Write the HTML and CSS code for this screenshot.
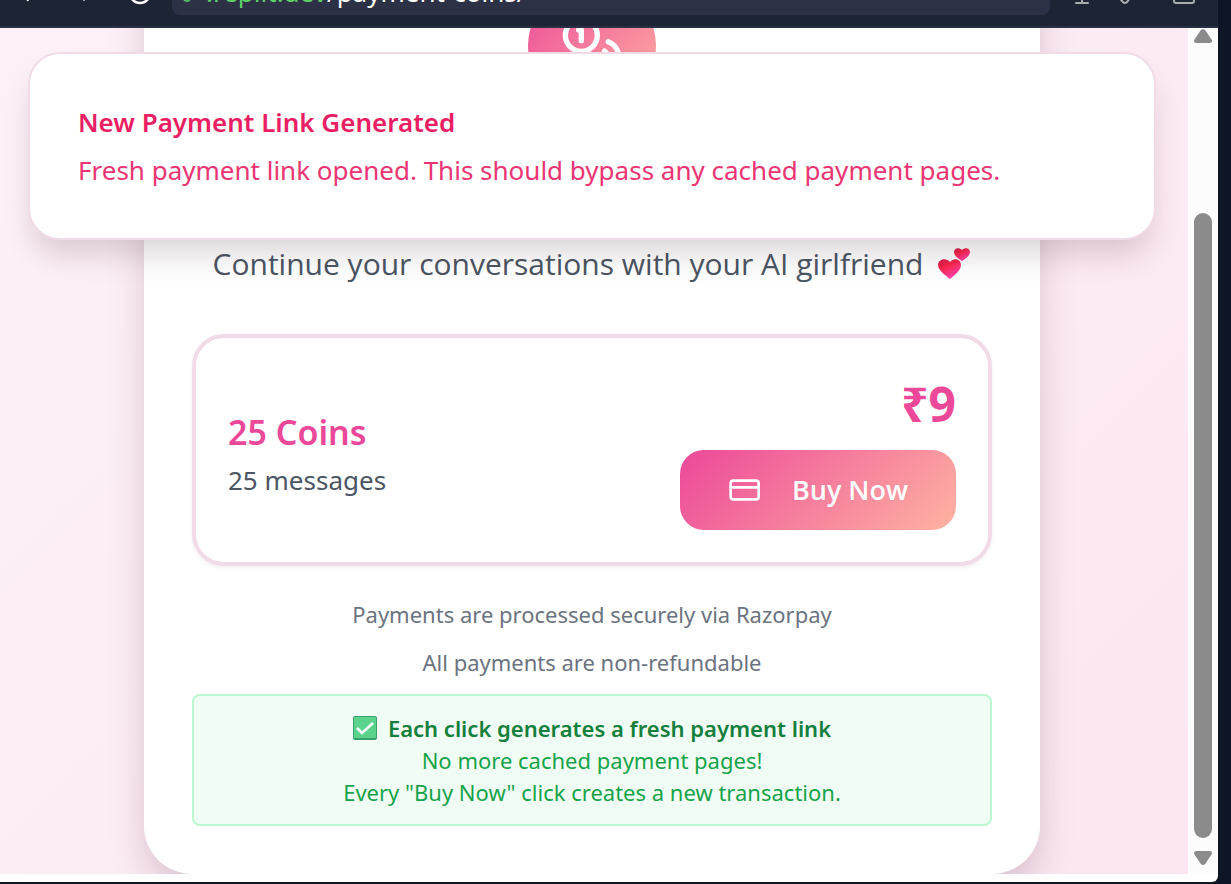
FILE: index.html
```html
<!DOCTYPE html>
<html lang="en">
<head>
<meta charset="utf-8">
<title>Buy Coins</title>
<link rel="stylesheet" href="styles.css">
</head>
<body>
<div class="window">
  <header class="toolbar">
    <div class="nav-icons">
      <svg viewBox="0 0 172 28" width="172" height="28" fill="none" aria-hidden="true">
        <path d="M27 -2l1 3" stroke="#fff" stroke-width="2"/>
        <path d="M84 -2v3" stroke="#9a9ea6" stroke-width="2"/>
        <circle cx="140" cy="-7" r="10" stroke="#fff" stroke-width="2.4"/>
      </svg>
    </div>
    <div class="address">
      <svg class="lock" viewBox="0 0 10 10" width="10" height="10" aria-hidden="true"><circle cx="5" cy="-2" r="4" fill="#55b96a"/></svg>
      <span class="url"><span class="host">.replit.dev</span>/payment-coins/</span>
    </div>
    <div class="tool-icons">
      <svg viewBox="0 0 168 28" width="168" height="28" fill="none" stroke="#a9adad" stroke-width="2" stroke-linecap="round" aria-hidden="true">
        <path d="M26 3h12M32 3v-6M71 0l2 2q2 2 4 0l4-5M124 -4v5q0 2 2 2h16q2 0 2-2v-5"/>
      </svg>
    </div>
  </header>
  <div class="viewport">
    <main class="page">
      <section class="card">
        <div class="coin-badge">
          <svg viewBox="0 0 24 24" width="64" height="64" fill="none" stroke="#fff" stroke-width="2" stroke-linecap="round" stroke-linejoin="round" aria-hidden="true">
            <circle cx="8" cy="8" r="6"/><path d="M18.09 10.37A6 6 0 1 1 10.34 18M7 6h1v4M16.71 13.88l.7.71-2.82 2.82"/>
          </svg>
        </div>
        <p class="subtitle">Continue your conversations with your AI girlfriend
          <svg class="hearts" viewBox="0 0 34 34" width="34" height="34" role="img" aria-label="Two hearts">
            <defs><linearGradient id="heart" x1="0" y1="0" x2=".6" y2="1"><stop offset="0" stop-color="#c91d4b"/><stop offset=".4" stop-color="#fa2548"/><stop offset="1" stop-color="#ff43b0"/></linearGradient></defs>
            <path fill="url(#heart)" d="M13 32C8 28 1 23 1 18c0-6 8-8 12-3 4-5 11-3 11 3 0 5-6 10-11 14z"/>
            <path fill="url(#heart)" d="M25 14c-3-2-8-5-8-9 0-4 5-5 8-2 3-3 8-2 8 2 0 4-5 7-8 9z"/>
          </svg>
        </p>
        <div class="pack">
          <div class="pack-info">
            <h2 class="pack-name">25 Coins</h2>
            <p class="pack-detail">25 messages</p>
          </div>
          <div class="pack-buy">
            <div class="price">₹9</div>
            <button class="buy" type="button">
              <svg viewBox="0 0 24 24" width="32" height="32" fill="none" stroke="currentColor" stroke-width="2" stroke-linecap="round" stroke-linejoin="round" aria-hidden="true"><rect width="21" height="14" x="2" y="5" rx="2"/><path d="M2 10h21"/></svg>
              <span>Buy Now</span>
            </button>
          </div>
        </div>
        <div class="notes">
          <p>Payments are processed securely via Razorpay</p>
          <p>All payments are non-refundable</p>
          <div class="notice">
            <p class="notice-title">
              <svg class="check" viewBox="0 0 24 24" width="24" height="24" role="img" aria-label="Done"><rect width="24" height="24" rx="2" fill="#38a06c"/><rect x="1" y="1" width="22" height="21" rx="1" fill="#5bd38d"/><path d="M4 12l5 5L20 7" fill="none" stroke="#fff" stroke-width="2.500"/></svg>
              Each click generates a fresh payment link</p>
            <p>No more cached payment pages!</p>
            <p>Every "Buy Now" click creates a new transaction.</p>
          </div>
        </div>
      </section>
      <div class="toast" role="status">
        <p class="toast-title">New Payment Link Generated</p>
        <p class="toast-text">Fresh payment link opened. This should bypass any cached payment pages.</p>
      </div>
    </main>
    <div class="scrollbar" aria-hidden="true">
      <svg viewBox="0 0 18 14" width="18" height="14"><path d="M6.500 1.500q2.500-3 5 0l6 9q1.500 3.500-2 3.500h-13q-3.500 0-2-3.500z" fill="#8b8b8b"/></svg>
      <div class="thumb"></div>
      <svg viewBox="0 0 18 14" width="18" height="14"><path d="M6.500 12.500q2.500 3 5 0l6-9q1.500-3.500-2-3.500h-13q-3.500 0-2 3.500z" fill="#8b8b8b"/></svg>
    </div>
  </div>
</div>
</body>
</html>
```
FILE: styles.css
```css
* { box-sizing: border-box; }
body {
  margin: 0;
  height: 100vh;
  padding: 0 13px 2px 0;
  overflow: hidden;
  background: #0e1524;
  font-family: "Noto Sans", "Open Sans", sans-serif;
}
p, h2 { margin: 0; }
.window {
  height: 100%;
  display: flex;
  flex-direction: column;
  background: #fff;
  border-radius: 0 0 6px 0;
  overflow: hidden;
}
.toolbar {
  flex: none;
  height: 28px;
  display: flex;
  background: #1d2433;
  border-bottom: 2px solid #2b3144;
}
.toolbar svg { display: block; }
.address {
  flex: 1;
  height: 15px;
  display: flex;
  align-items: flex-end;
  gap: 14px;
  padding-left: 10px;
  background: #2c3145;
  border-radius: 0 0 8px 8px;
  color: #fff;
  font-size: 26px;
  line-height: 30px;
  overflow: hidden;
}
.lock { align-self: flex-start; }
.url { padding-bottom: 8px; }
.host { color: #5fd068; }
.viewport {
  flex: 1;
  min-height: 0;
  display: flex;
  padding-bottom: 8px;
}
.page {
  position: relative;
  flex: 1;
  display: flex;
  flex-direction: column;
  justify-content: flex-end;
  align-items: center;
  padding-right: 4px;
  overflow: hidden;
  background: linear-gradient(135deg, #fdf1f7, #fbe6f1);
}
.card {
  flex: none;
  width: 100%;
  max-width: 896px;
  padding: 48px;
  background: #fff;
  border-radius: 48px;
  box-shadow: 0 20px 40px -6px rgba(60, 10, 40, .22);
}
.coin-badge {
  width: 128px;
  height: 128px;
  margin: 0 auto 128px;
  display: flex;
  align-items: center;
  justify-content: center;
  border-radius: 50%;
  background: linear-gradient(135deg, #ec4899, #ffb3a1);
}
.subtitle {
  margin-bottom: 44px;
  display: flex;
  justify-content: center;
  align-items: center;
  gap: 14px;
  color: #4b5563;
  font-family: "Open Sans", "Noto Sans", sans-serif;
  font-size: 30px;
  line-height: 52px;
  white-space: nowrap;
}
.pack {
  display: flex;
  justify-content: space-between;
  align-items: center;
  padding: 32px;
  border: 4px solid #f1dbe6;
  border-radius: 32px;
  box-shadow: 0 2px 4px rgba(0, 0, 0, .06);
}
.pack-name {
  color: #ec4899;
  font-size: 34px;
  font-weight: 600;
  line-height: 60px;
}
.pack-detail {
  color: #4b5563;
  font-size: 26px;
  line-height: 36px;
}
.pack-buy {
  display: flex;
  flex-direction: column;
  align-items: flex-end;
  gap: 12px;
}
.price {
  color: #ec4899;
  font-size: 48px;
  font-weight: 700;
  line-height: 68px;
}
.buy {
  height: 80px;
  display: flex;
  align-items: center;
  gap: 32px;
  padding: 0 48px;
  border: 0;
  border-radius: 24px;
  background: linear-gradient(135deg, #ec4899, #ffb3a1);
  color: #fff;
  font: 600 27px/40px "Open Sans", "Noto Sans", sans-serif;
}
.notes {
  margin-top: 32px;
  display: flex;
  flex-direction: column;
  gap: 16px;
  color: #6b7280;
  font-size: 22px;
  line-height: 32px;
  text-align: center;
}
.notice {
  padding: 16px;
  border: 2px solid #bbf7d0;
  border-radius: 8px;
  background: #f0fdf4;
  color: #16a34a;
}
.notice-title {
  display: flex;
  justify-content: center;
  align-items: center;
  gap: 11px;
  color: #15803d;
  font-weight: 600;
}
.toast {
  position: absolute;
  top: 24px;
  left: 28px;
  right: 32px;
  padding: 48px;
  border: 2px solid #f1dbe6;
  border-radius: 32px;
  background: #fff;
  box-shadow: 0 20px 30px -6px rgba(40, 10, 30, .17);
  font-size: 26px;
  line-height: 40px;
}
.toast-title {
  margin-bottom: 8px;
  color: #e91e63;
  font-weight: 600;
}
.toast-text { color: #eb3573; }
.scrollbar {
  width: 30px;
  display: flex;
  flex-direction: column;
  align-items: center;
  padding: 1px 0 9px;
  background: #fcfcfc;
}
.thumb {
  flex: 1;
  width: 18px;
  margin: 170px 0 13px;
  border-radius: 9px;
  background: #8b8b8b;
}
```
